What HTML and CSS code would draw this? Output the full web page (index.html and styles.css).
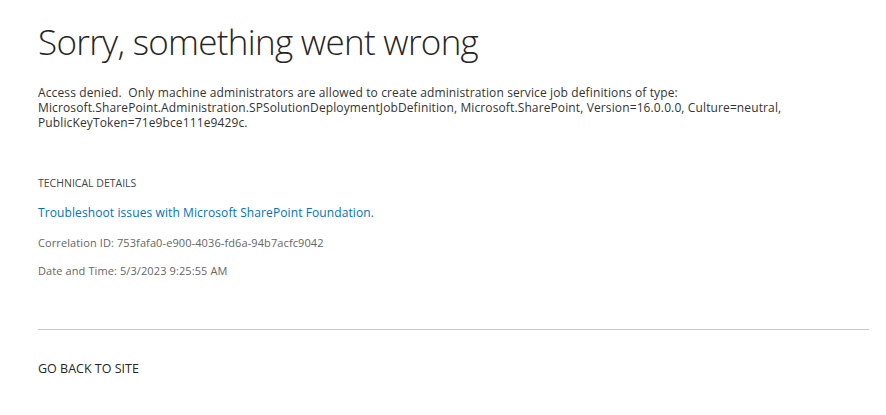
FILE: index.html
```html
<!DOCTYPE html>
<html>
<head>
<meta charset="utf-8">
<link rel="stylesheet" href="styles.css">
</head>
<body>
<div class="page">
  <h1 class="title">Sorry, something went wrong</h1>
  <p class="message">Access denied.&nbsp; Only machine administrators are allowed to create administration service job definitions of type: Microsoft.SharePoint.Administration.SPSolutionDeploymentJobDefinition, Microsoft.SharePoint, Version=16.0.0.0, Culture=neutral, PublicKeyToken=71e9bce111e9429c.</p>
  <div class="details">
    <div class="details-head">TECHNICAL DETAILS</div>
    <a class="link" href="#">Troubleshoot issues with Microsoft SharePoint Foundation.</a>
    <div class="meta">Correlation ID: 753fafa0-e900-4036-fd6a-94b7acfc9042</div>
    <div class="meta meta-date">Date and Time: 5/3/2023 9:25:55 AM</div>
  </div>
  <hr class="rule">
  <a class="back" href="#">GO BACK TO SITE</a>
</div>
</body>
</html>
```
FILE: styles.css
```css
html, body {
  margin: 0;
  padding: 0;
  background: #fff;
}
body {
  font-family: "Open Sans", "Noto Sans", sans-serif;
  color: #333;
}
.page {
  padding: 19px 17px 0 38px;
  display: flex;
  flex-direction: column;
  align-items: flex-start;
}
.title {
  margin: 0;
  font-size: 35px;
  font-weight: 300;
  letter-spacing: -0.7px;
  color: #262626;
  line-height: 46px;
}
.message {
  margin: 20px 0 0;
  font-size: 12px;
  letter-spacing: 0.12px;
  line-height: 15px;
  color: #333;
  max-width: 790px;
}
.details {
  margin-top: 46px;
  display: flex;
  flex-direction: column;
  align-items: flex-start;
}
.details-head {
  font-size: 10.5px;
  color: #444;
  line-height: 14px;
}
.link {
  margin-top: 15px;
  font-size: 12px;
  letter-spacing: 0.1px;
  line-height: 16px;
  color: #0072c6;
  text-decoration: none;
}
.meta {
  margin-top: 14px;
  font-size: 11px;
  letter-spacing: 0.1px;
  line-height: 15px;
  color: #666;
}
.meta-date {
  margin-top: 13px;
}
.rule {
  align-self: stretch;
  margin: 51px 0 0;
  border: 0;
  border-top: 1px solid #c6c6c6;
  height: 0;
}
.back {
  margin-top: 30px;
  font-size: 12.5px;
  line-height: 17px;
  color: #262626;
  text-decoration: none;
}
```
